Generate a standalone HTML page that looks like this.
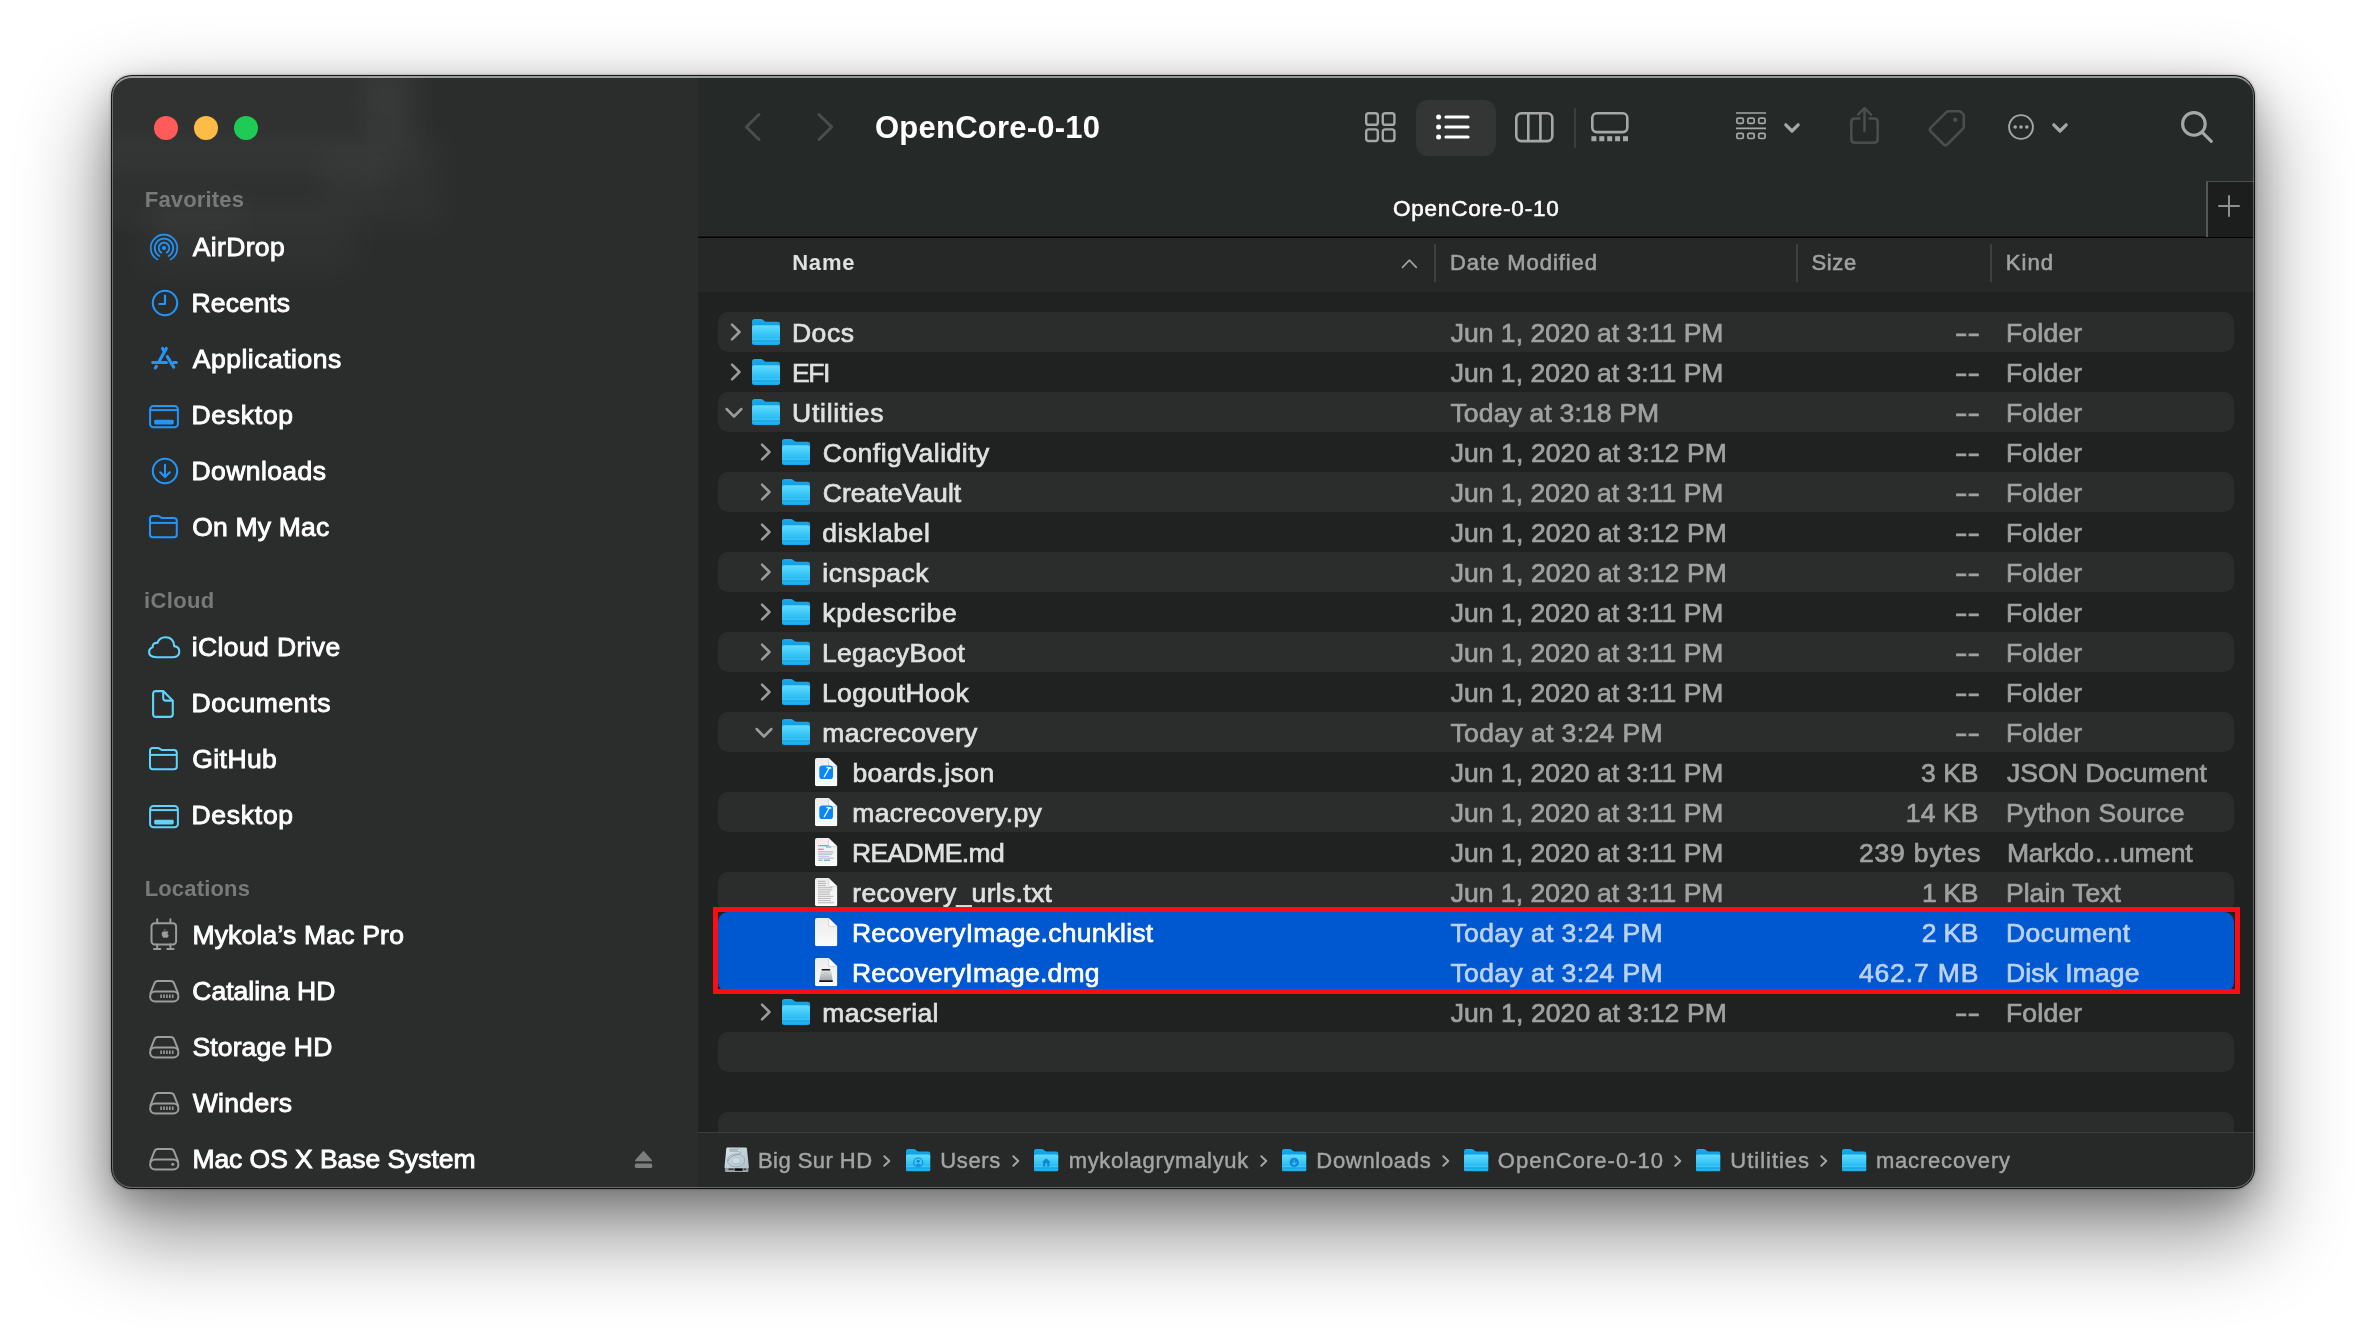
<!DOCTYPE html>
<html lang="en"><head><meta charset="utf-8"><title>OpenCore-0-10</title>
<style>
*{box-sizing:border-box;margin:0;padding:0}
html,body{width:2366px;height:1336px;overflow:hidden;background:#fff}
body{font-family:"Liberation Sans",sans-serif;position:relative;-webkit-font-smoothing:antialiased}
.win{position:absolute;left:112px;top:76px;width:2142px;height:1112px;border-radius:20px;background:#202221;
 box-shadow:0 0 0 1px rgba(0,0,0,.88),0 0 3px 1px rgba(0,0,0,.32),0 40px 84px 8px rgba(0,0,0,.44),0 12px 34px rgba(0,0,0,.24)}
.clip{position:absolute;inset:0;border-radius:20px;overflow:hidden;will-change:transform}
.rim{position:absolute;inset:0;border-radius:20px;border:1.5px solid rgba(255,255,255,.30);border-top:2px solid rgba(255,255,255,.52);pointer-events:none}
.sidebar{position:absolute;left:0;top:0;width:586px;height:1112px;background:#2b2d2c}
.sidebar .glow{position:absolute;left:0;top:0;width:586px;height:330px;overflow:hidden}
.glow i{position:absolute;display:block;background:#fff;filter:blur(16px)}
.tl{position:absolute;top:39.8px;width:24.400px;height:24.400px;border-radius:50%}
.toolbar{position:absolute;left:586px;top:0;width:1556px;height:161px;background:#252928}
.tabline{position:absolute;left:586px;top:160px;width:1556px;height:2px;background:linear-gradient(#151716 0,#151716 35%,#040404 35%)}
.colhdr{position:absolute;left:586px;top:162px;width:1556px;height:54px;background:#252827}
.colsep{position:absolute;top:168px;width:2px;height:38px;background:#3d403f}
.selbtn{position:absolute;left:1304px;top:24px;width:80px;height:56px;border-radius:12px;background:#333635}
.tbsep{position:absolute;left:1462.3px;top:32px;width:1.500px;height:40px;background:#3b3e3d}
.newtab{position:absolute;left:2094px;top:105px;width:48px;height:56px;background:#1c1e1d;border-left:2px solid #555857;border-top:1.500px solid #4c4f4e}
.list{position:absolute;left:586px;top:216px;width:1556px;height:840px;background:#202221}
.row{position:absolute;left:606px;width:1516px;height:40px;border-radius:10px}
.row.alt{background:#2b2d2c}
.row.sel{background:#0058d0}
.pathbar{position:absolute;left:586px;top:1056px;width:1556px;height:56px;background:#262928;border-top:1.500px solid #3b3e3d}
.redbox{position:absolute;left:601px;top:831px;width:1527px;height:87px;border:5px solid #fd0d12}
.t{position:absolute;white-space:pre;}
.i{position:absolute;overflow:visible}
</style></head>
<body>
<svg width="0" height="0" style="position:absolute"><defs>
<linearGradient id="fb" x1="0" y1="0" x2="0" y2="1"><stop offset="0" stop-color="#19abec"/><stop offset="1" stop-color="#0b93da"/></linearGradient>
<linearGradient id="ff" x1="0" y1="0" x2="0" y2="1"><stop offset="0" stop-color="#62dcfe"/><stop offset="0.45" stop-color="#3ac7f8"/><stop offset="1" stop-color="#15a9ea"/></linearGradient>
<linearGradient id="pp" x1="0" y1="0" x2="0" y2="1"><stop offset="0" stop-color="#ececec"/><stop offset="1" stop-color="#fbfbfb"/></linearGradient>
<linearGradient id="hd" x1="0" y1="0" x2="0" y2="1"><stop offset="0" stop-color="#e9ecee"/><stop offset="1" stop-color="#9aa1a6"/></linearGradient>
<symbol id="folder" viewBox="0 0 28 26"><path d="M0 2.600Q0 0 2.600 0H8.800Q10 0 10.900 .800L12.300 2.100Q13.100 2.800 14.300 2.800H25.600Q28 2.800 28 5.200V12H0Z" fill="url(#fb)"/>
<rect x="0" y="6.200" width="28" height="19.800" rx="2.200" fill="url(#ff)"/><path d="M0 20.300H28" stroke="#7fe0fb" stroke-opacity=".55" stroke-width=".8"/><path d="M0 23.800H28" stroke="#7fe0fb" stroke-opacity=".4" stroke-width=".7"/><rect x="0" y="20.700" width="28" height="2.700" fill="#0a9be0" fill-opacity=".35"/></symbol>
<symbol id="paper" viewBox="0 0 22.400 28.200"><path d="M0 2Q0 0 2 0H13.600L22.400 8.600V26.200Q22.400 28.200 20.400 28.200H2Q0 28.200 0 26.200Z" fill="url(#pp)"/><path d="M13.600 0L22.400 8.600H15.400Q13.600 8.600 13.600 6.800Z" fill="#fdfdfd"/><path d="M13.600 0V6.800Q13.600 8.600 15.400 8.600H22.400" fill="none" stroke="#c9c9c9" stroke-width=".7"/></symbol>
</defs></svg>
<div class="win">
 <div class="clip">
  <div class="sidebar"><div class="glow"><i style="left:-20px;top:-20px;width:325px;height:115px;opacity:.028"></i><i style="left:-20px;top:60px;width:350px;height:90px;opacity:.022"></i><i style="left:30px;top:135px;width:215px;height:60px;opacity:.024"></i><i style="left:250px;top:-10px;width:50px;height:70px;opacity:.03"></i><i style="left:210px;top:75px;width:60px;height:50px;opacity:.024"></i><i style="left:40px;top:120px;width:90px;height:40px;opacity:.02"></i></div>
   <div class="tl" style="left:41.80000000000001px;background:#fe5b5a"></div>
   <div class="tl" style="left:81.80000000000001px;background:#febb45"></div>
   <div class="tl" style="left:121.80000000000001px;background:#1fcb55"></div>
   <svg class="i" style="left:35.90px;top:155.50px" width="32" height="32" viewBox="0 0 32 32" ><g fill="none" stroke="#2196fc" stroke-width="1.7" stroke-linecap="round">
<path d="M9.55 27.63A13.3 13.3 0 1 1 22.45 27.63"/><path d="M11.49 24.13A9.3 9.3 0 1 1 20.51 24.13"/><path d="M13.43 20.64A5.3 5.3 0 1 1 18.57 20.64"/></g><circle cx="16" cy="16" r="2" fill="#2196fc"/></svg><svg class="i" style="left:36.90px;top:211.10px" width="32" height="32" viewBox="0 0 32 32" ><g fill="none" stroke="#2196fc" stroke-width="2.1" stroke-linecap="round" stroke-linejoin="round"><circle cx="16" cy="16" r="12.2"/><path d="M16 8.5V17H10.3"/></g></svg><svg class="i" style="left:38.00px;top:269.00px" width="30" height="26" viewBox="0 0 30 26" ><g fill="none" stroke="#2196fc" stroke-width="3.1" stroke-linecap="round">
<path d="M16.3 3.4L9.2 16.2"/><path d="M12.6 3.4L14.3 6.4"/><path d="M17.3 11.6L23.7 22.2"/><path d="M5.4 22.9L6.4 21.4"/><path d="M2.7 17.5H16.4M23.6 17.5H26.300"/></g></svg><svg class="i" style="left:37.00px;top:328.80px" width="30" height="24" viewBox="0 0 30 24" ><rect x="1.1" y="1" width="27.8" height="21.3" rx="3.4" fill="none" stroke="#2196fc" stroke-width="2"/>
<path d="M1.5 5.1H28.5" stroke="#2196fc" stroke-width="2"/><rect x="5.2" y="14.8" width="19.5" height="4.6" rx="1.4" fill="#2196fc"/></svg><svg class="i" style="left:36.90px;top:379.10px" width="32" height="32" viewBox="0 0 32 32" ><g fill="none" stroke="#2196fc" stroke-width="2.1" stroke-linecap="round" stroke-linejoin="round"><circle cx="16" cy="16" r="12.2"/><path d="M16 9.8V21.8M11.2 17.3L16 22.1L20.8 17.3"/></g></svg><svg class="i" style="left:37.10px;top:439.00px" width="30" height="24" viewBox="0 0 30 24" ><g fill="none" stroke="#2196fc" stroke-width="2" stroke-linejoin="round">
<path d="M1 19.400V3.800Q1 1 3.800 1H8.600Q10 1 11 1.900L11.800 2.400Q12.800 3.100 14.200 3.100H25Q27.800 3.100 27.800 5.900V19.400Q27.800 22.200 25 22.200H3.800Q1 22.200 1 19.400Z"/>
<path d="M1.300 7.900H27.600"/></g></svg><svg class="i" style="left:35.50px;top:559.60px" width="33" height="23" viewBox="0 0 33 23" ><path d="M8.2 21.2H25.1Q31.3 21.2 31.3 15.6Q31.3 10.6 26.2 10.1Q25.6 1.2 17.4 1.2Q11.6 1.2 9.4 6.9Q4.4 6.4 4.6 11.2Q1.1 12.4 1.1 16.1Q1.1 21.2 8.2 21.2Z" fill="none" stroke="#60d4fc" stroke-width="2.1" stroke-linejoin="round"/></svg><svg class="i" style="left:40.40px;top:614.00px" width="23" height="29" viewBox="0 0 23 29" ><g fill="none" stroke="#60d4fc" stroke-width="2.1" stroke-linejoin="round">
<path d="M1.1 24V4Q1.1 1.1 4 1.1H11.2L20.8 10.8V24Q20.8 26.9 17.9 26.9H4Q1.1 26.9 1.1 24Z"/><path d="M11.2 1.4V8Q11.2 10.6 13.8 10.6H20.5"/></g></svg><svg class="i" style="left:37.10px;top:671.00px" width="30" height="24" viewBox="0 0 30 24" ><g fill="none" stroke="#60d4fc" stroke-width="2" stroke-linejoin="round">
<path d="M1 19.400V3.800Q1 1 3.800 1H8.600Q10 1 11 1.900L11.800 2.400Q12.800 3.100 14.200 3.100H25Q27.800 3.100 27.800 5.900V19.400Q27.800 22.200 25 22.200H3.800Q1 22.200 1 19.400Z"/>
<path d="M1.300 7.900H27.600"/></g></svg><svg class="i" style="left:37.00px;top:728.50px" width="30" height="24" viewBox="0 0 30 24" ><rect x="1.1" y="1" width="27.8" height="21.3" rx="3.4" fill="none" stroke="#60d4fc" stroke-width="2"/>
<path d="M1.5 5.1H28.5" stroke="#60d4fc" stroke-width="2"/><rect x="5.2" y="14.8" width="19.5" height="4.6" rx="1.4" fill="#60d4fc"/></svg><svg class="i" style="left:38.40px;top:841.60px" width="28" height="33" viewBox="0 0 28 33" ><g fill="none" stroke="#9b9d9c" stroke-width="2" stroke-linecap="round" stroke-linejoin="round">
<rect x="1.5" y="5.2" width="24.6" height="21.2" rx="3.2"/>
<path d="M7.2 5V1.2M20.4 5V1.2M7.2 26.6V30.6M20.4 26.6V30.6M4 31H10.4M17.2 31H23.6"/></g>
<path d="M15.6 11.1c-.1.9-.8 1.6-1.6 1.6 0-.9.8-1.7 1.600-1.6zM13.800 13.200c.5 0 .9.300 1.400.300s1-.4 1.700-.3c.7 0 1.300.4 1.600.9-1.400.9-1.200 2.900.3 3.500-.3.900-1.200 2.300-2 2.300-.5 0-.8-.3-1.400-.3s-.9.300-1.400.3c-.9 0-2.300-2.100-2.300-3.900 0-1.700 1.100-2.800 2.100-2.800z" fill="#9b9d9c"/></svg><svg class="i" style="left:36.70px;top:904.20px" width="31" height="23" viewBox="0 0 31 23" ><g fill="none" stroke="#9b9d9c" stroke-width="2" stroke-linejoin="round">
<path d="M1.2 14.2L5.3 3.6Q6.3 1.1 9 1.100H21.500Q24.2 1.100 25.2 3.600L29.300 14.2"/>
<rect x="1.1" y="11.4" width="28.3" height="10" rx="5"/></g><path d="M12.1 14.5V17.9" stroke="#9b9d9c" stroke-width="1.600"/><path d="M15.0 14.5V17.9" stroke="#9b9d9c" stroke-width="1.600"/><path d="M17.9 14.5V17.9" stroke="#9b9d9c" stroke-width="1.600"/><path d="M20.799999999999997 14.5V17.9" stroke="#9b9d9c" stroke-width="1.600"/><path d="M23.7 14.5V17.9" stroke="#9b9d9c" stroke-width="1.600"/></svg><svg class="i" style="left:36.70px;top:960.20px" width="31" height="23" viewBox="0 0 31 23" ><g fill="none" stroke="#9b9d9c" stroke-width="2" stroke-linejoin="round">
<path d="M1.2 14.2L5.3 3.6Q6.3 1.1 9 1.100H21.500Q24.2 1.100 25.2 3.600L29.300 14.2"/>
<rect x="1.1" y="11.4" width="28.3" height="10" rx="5"/></g><path d="M12.1 14.5V17.9" stroke="#9b9d9c" stroke-width="1.600"/><path d="M15.0 14.5V17.9" stroke="#9b9d9c" stroke-width="1.600"/><path d="M17.9 14.5V17.9" stroke="#9b9d9c" stroke-width="1.600"/><path d="M20.799999999999997 14.5V17.9" stroke="#9b9d9c" stroke-width="1.600"/><path d="M23.7 14.5V17.9" stroke="#9b9d9c" stroke-width="1.600"/></svg><svg class="i" style="left:36.70px;top:1016.20px" width="31" height="23" viewBox="0 0 31 23" ><g fill="none" stroke="#9b9d9c" stroke-width="2" stroke-linejoin="round">
<path d="M1.2 14.2L5.3 3.6Q6.3 1.1 9 1.100H21.500Q24.2 1.100 25.2 3.600L29.300 14.2"/>
<rect x="1.1" y="11.4" width="28.3" height="10" rx="5"/></g><path d="M12.1 14.5V17.9" stroke="#9b9d9c" stroke-width="1.600"/><path d="M15.0 14.5V17.9" stroke="#9b9d9c" stroke-width="1.600"/><path d="M17.9 14.5V17.9" stroke="#9b9d9c" stroke-width="1.600"/><path d="M20.799999999999997 14.5V17.9" stroke="#9b9d9c" stroke-width="1.600"/><path d="M23.7 14.5V17.9" stroke="#9b9d9c" stroke-width="1.600"/></svg><svg class="i" style="left:36.70px;top:1072.20px" width="31" height="23" viewBox="0 0 31 23" ><g fill="none" stroke="#9b9d9c" stroke-width="2" stroke-linejoin="round">
<path d="M1.2 14.2L5.3 3.6Q6.3 1.1 9 1.100H21.500Q24.2 1.100 25.2 3.600L29.300 14.2"/>
<rect x="1.1" y="11.4" width="28.3" height="10" rx="5"/></g><circle cx="23.8" cy="16.2" r="1.5" fill="#9b9d9c"/></svg><svg class="i" style="left:522.00px;top:1073.60px" width="19" height="19" viewBox="0 0 19 19" ><path d="M9.500 0.800L18 10.200Q18.400 11.200 17.200 11.200H1.800Q0.600 11.200 1 10.200Z" fill="#7c7e7d"/><rect x="0.800" y="13.400" width="17.400" height="4.600" rx="1.600" fill="#7c7e7d"/></svg>
   <span class="t" style="left:32.83px;top:111.00px;font-size:22px;line-height:26px;letter-spacing:0.157px;color:#787a79;font-weight:bold;">Favorites</span>
<span class="t" style="left:32.06px;top:511.50px;font-size:22px;line-height:26px;letter-spacing:0.342px;color:#787a79;font-weight:bold;">iCloud</span>
<span class="t" style="left:32.63px;top:799.75px;font-size:22px;line-height:26px;letter-spacing:0.172px;color:#787a79;font-weight:bold;">Locations</span>
<span class="t" style="left:80.75px;top:154.75px;font-size:26.5px;line-height:32px;letter-spacing:0.340px;color:#ffffff;-webkit-text-stroke:0.9px #ffffff;">AirDrop</span>
<span class="t" style="left:79.43px;top:210.75px;font-size:26.5px;line-height:32px;letter-spacing:0.220px;color:#ffffff;-webkit-text-stroke:0.9px #ffffff;">Recents</span>
<span class="t" style="left:80.75px;top:266.75px;font-size:26.5px;line-height:32px;letter-spacing:0.511px;color:#ffffff;-webkit-text-stroke:0.9px #ffffff;">Applications</span>
<span class="t" style="left:79.43px;top:322.75px;font-size:26.5px;line-height:32px;letter-spacing:0.745px;color:#ffffff;-webkit-text-stroke:0.9px #ffffff;">Desktop</span>
<span class="t" style="left:79.43px;top:378.75px;font-size:26.5px;line-height:32px;letter-spacing:0.429px;color:#ffffff;-webkit-text-stroke:0.9px #ffffff;">Downloads</span>
<span class="t" style="left:80.34px;top:434.75px;font-size:26.5px;line-height:32px;letter-spacing:0.174px;color:#ffffff;-webkit-text-stroke:0.9px #ffffff;">On My Mac</span>
<span class="t" style="left:79.83px;top:554.75px;font-size:26.5px;line-height:32px;letter-spacing:0.366px;color:#ffffff;-webkit-text-stroke:0.9px #ffffff;">iCloud Drive</span>
<span class="t" style="left:79.43px;top:610.75px;font-size:26.5px;line-height:32px;letter-spacing:0.626px;color:#ffffff;-webkit-text-stroke:0.9px #ffffff;">Documents</span>
<span class="t" style="left:80.27px;top:666.75px;font-size:26.5px;line-height:32px;letter-spacing:0.424px;color:#ffffff;-webkit-text-stroke:0.9px #ffffff;">GitHub</span>
<span class="t" style="left:79.43px;top:722.75px;font-size:26.5px;line-height:32px;letter-spacing:0.745px;color:#ffffff;-webkit-text-stroke:0.9px #ffffff;">Desktop</span>
<span class="t" style="left:80.43px;top:842.75px;font-size:26.5px;line-height:32px;letter-spacing:0.188px;color:#ffffff;-webkit-text-stroke:0.9px #ffffff;">Mykola’s Mac Pro</span>
<span class="t" style="left:80.25px;top:898.75px;font-size:26.5px;line-height:32px;letter-spacing:0.015px;color:#ffffff;-webkit-text-stroke:0.9px #ffffff;">Catalina HD</span>
<span class="t" style="left:80.40px;top:954.75px;font-size:26.5px;line-height:32px;letter-spacing:0.158px;color:#ffffff;-webkit-text-stroke:0.9px #ffffff;">Storage HD</span>
<span class="t" style="left:80.68px;top:1010.75px;font-size:26.5px;line-height:32px;letter-spacing:0.348px;color:#ffffff;-webkit-text-stroke:0.9px #ffffff;">Winders</span>
<span class="t" style="left:80.43px;top:1066.75px;font-size:26.5px;line-height:32px;letter-spacing:-0.061px;color:#ffffff;-webkit-text-stroke:0.9px #ffffff;">Mac OS X Base System</span>
  </div>
  <div class="toolbar"></div>
  <div class="tabline"></div>
  <div class="colhdr"></div>
  <div class="list"></div>
  <div class="selbtn"></div><div class="tbsep"></div><div class="newtab"></div>
  <div class="colsep" style="left:1322px"></div><div class="colsep" style="left:1684px"></div><div class="colsep" style="left:1878px"></div>
  <svg class="i" style="left:632.00px;top:37.00px" width="17" height="28" viewBox="0 0 17 28" ><path d="M15 1.500L2.300 14L15 26.500" fill="none" stroke="#4b4e4d" stroke-width="3" stroke-linecap="round" stroke-linejoin="round"/></svg><svg class="i" style="left:704.50px;top:37.00px" width="17" height="28" viewBox="0 0 17 28" ><path d="M2 1.500L14.700 14L2 26.500" fill="none" stroke="#4b4e4d" stroke-width="3" stroke-linecap="round" stroke-linejoin="round"/></svg><svg class="i" style="left:1252.70px;top:35.80px" width="31" height="31" viewBox="0 0 31 31" ><g fill="none" stroke="#a6a8a7" stroke-width="2.4"><rect x="1.2" y="1.2" width="11.600" height="11.600" rx="2.400"/><rect x="1.2" y="17.4" width="11.600" height="11.600" rx="2.400"/><rect x="17.8" y="1.2" width="11.600" height="11.600" rx="2.400"/><rect x="17.8" y="17.4" width="11.600" height="11.600" rx="2.400"/></g></svg><svg class="i" style="left:1324.40px;top:37.90px" width="34" height="26" viewBox="0 0 34 26" ><circle cx="2.600" cy="3" r="2.500" fill="#fff"/><rect x="8.400" y="1.4" width="25.200" height="3.200" rx="1.600" fill="#fff"/><circle cx="2.600" cy="13" r="2.500" fill="#fff"/><rect x="8.400" y="11.4" width="25.200" height="3.200" rx="1.600" fill="#fff"/><circle cx="2.600" cy="23" r="2.500" fill="#fff"/><rect x="8.400" y="21.4" width="25.200" height="3.200" rx="1.600" fill="#fff"/></svg><svg class="i" style="left:1403.00px;top:35.80px" width="39" height="31" viewBox="0 0 39 31" ><g fill="none" stroke="#a6a8a7" stroke-width="2.600"><rect x="1.300" y="1.300" width="36" height="27.800" rx="5"/><path d="M13.300 1.200V29.200M25.400 1.200V29.200"/></g></svg><svg class="i" style="left:1479.00px;top:35.90px" width="38" height="30" viewBox="0 0 38 30" ><rect x="1.300" y="1.300" width="35" height="18.800" rx="4.500" fill="none" stroke="#a6a8a7" stroke-width="2.600"/><rect x="0.4" y="24.200" width="5" height="5" fill="#a6a8a7"/><rect x="8.3" y="24.200" width="5" height="5" fill="#a6a8a7"/><rect x="16.2" y="24.200" width="5" height="5" fill="#a6a8a7"/><rect x="24.1" y="24.200" width="5" height="5" fill="#a6a8a7"/><rect x="32.0" y="24.200" width="5" height="5" fill="#a6a8a7"/></svg><svg class="i" style="left:1624.00px;top:36.00px" width="31" height="29" viewBox="0 0 31 29" ><g fill="none" stroke="#a6a8a7" stroke-width="1.700"><path d="M0 1H30M0 16.300H30"/><rect x="0.9" y="6.2" width="6.400" height="5.200" rx="1.500"/><rect x="0.9" y="21.3" width="6.400" height="5.200" rx="1.500"/><rect x="11.8" y="6.2" width="6.400" height="5.200" rx="1.500"/><rect x="11.8" y="21.3" width="6.400" height="5.200" rx="1.500"/><rect x="22.7" y="6.2" width="6.400" height="5.200" rx="1.500"/><rect x="22.7" y="21.3" width="6.400" height="5.200" rx="1.500"/></g></svg><svg class="i" style="left:1672.00px;top:47.20px" width="16" height="10" viewBox="0 0 16 10" ><path d="M1.800 1.800L8 8L14.200 1.800" fill="none" stroke="#a6a8a7" stroke-width="3.200" stroke-linecap="round" stroke-linejoin="round"/></svg><svg class="i" style="left:1737.00px;top:30.00px" width="32" height="40" viewBox="0 0 32 40" ><g fill="none" stroke="#4b4e4d" stroke-width="2.500" stroke-linecap="round" stroke-linejoin="round"><path d="M10.500 12.500H6Q2.300 12.500 2.300 16.200V33Q2.300 36.700 6 36.700H25Q28.700 36.700 28.700 33V16.200Q28.700 12.500 25 12.500H20.500"/><path d="M15.500 25V2.400M9 8.600L15.500 2.200L22 8.600"/></g></svg><svg class="i" style="left:1815.00px;top:32.00px" width="40" height="40" viewBox="0 0 40 40" ><g fill="none" stroke="#4b4e4d" stroke-width="2.600" stroke-linejoin="round"><path d="M21.400 3.300H32.200Q33.400 3.300 34.200 4.100L36 5.900Q36.800 6.700 36.800 7.900V18.700Q36.800 19.900 36 20.700L20.200 36.500Q18.500 38.200 16.800 36.500L3.600 23.300Q1.900 21.600 3.600 19.900L19.400 4.100Q20.200 3.300 21.400 3.300Z"/></g><circle cx="28.300" cy="11.800" r="2.300" fill="#4b4e4d"/></svg><svg class="i" style="left:1894.60px;top:37.30px" width="28" height="28" viewBox="0 0 28 28" ><circle cx="14" cy="14" r="11.900" fill="none" stroke="#a6a8a7" stroke-width="1.900"/><circle cx="8.200" cy="14" r="1.800" fill="#a6a8a7"/><circle cx="14" cy="14" r="1.800" fill="#a6a8a7"/><circle cx="19.800" cy="14" r="1.800" fill="#a6a8a7"/></svg><svg class="i" style="left:1940.00px;top:47.20px" width="16" height="10" viewBox="0 0 16 10" ><path d="M1.800 1.800L8 8L14.200 1.800" fill="none" stroke="#a6a8a7" stroke-width="3.200" stroke-linecap="round" stroke-linejoin="round"/></svg><svg class="i" style="left:2068.00px;top:33.50px" width="34" height="34" viewBox="0 0 34 34" ><g fill="none" stroke="#a6a8a7" stroke-width="3.100" stroke-linecap="round"><circle cx="13.900" cy="13.900" r="11.300"/><path d="M22.300 22.300L31.300 31.300"/></g></svg><svg class="i" style="left:2106.00px;top:118.50px" width="22" height="22" viewBox="0 0 22 22" ><path d="M11 1V21M1 11H21" stroke="#8e908f" stroke-width="2" stroke-linecap="round"/></svg><svg class="i" style="left:1289.00px;top:181.50px" width="17" height="11" viewBox="0 0 17 11" ><path d="M1.500 9.300L8.400 2.200L15.300 9.300" fill="none" stroke="#a0a2a1" stroke-width="1.700" stroke-linecap="round" stroke-linejoin="round"/></svg>
  <span class="t" style="left:763.03px;top:32.80px;font-size:31px;line-height:37px;letter-spacing:0.227px;color:#ffffff;font-weight:bold;">OpenCore-0-10</span>
  <span class="t" style="left:1280.93px;top:119.20px;font-size:22.5px;line-height:27px;letter-spacing:0.792px;color:#ffffff;-webkit-text-stroke:0.55px #ffffff;">OpenCore-0-10</span>
  <span class="t" style="left:680.13px;top:173.50px;font-size:22px;line-height:26px;letter-spacing:0.818px;color:#dfe1e0;font-weight:bold;">Name</span>
<span class="t" style="left:1338.00px;top:173.50px;font-size:22px;line-height:26px;letter-spacing:0.940px;color:#a0a2a1;-webkit-text-stroke:0.6px #a0a2a1;">Date Modified</span>
<span class="t" style="left:1699.50px;top:173.50px;font-size:22px;line-height:26px;letter-spacing:0.627px;color:#a0a2a1;-webkit-text-stroke:0.6px #a0a2a1;">Size</span>
<span class="t" style="left:1893.80px;top:173.50px;font-size:22px;line-height:26px;letter-spacing:1.030px;color:#a0a2a1;-webkit-text-stroke:0.6px #a0a2a1;">Kind</span>
  <div class="row sel" style="top:836px;height:80px"></div>
  <div class="row alt" style="top:236px"></div>
<svg class="i" style="left:618.00px;top:246.70px" width="12" height="18" viewBox="0 0 12 18" ><path d="M2 1.600L9.500 9L2 16.400" fill="none" stroke="#9b9d9c" stroke-width="2.500" stroke-linecap="round" stroke-linejoin="round"/></svg>
<svg class="i" style="left:640.00px;top:242.90px" width="28" height="26"><use href="#folder"/></svg>
<span class="t" style="left:679.93px;top:241.20px;font-size:26.5px;line-height:32px;letter-spacing:0.552px;color:#dfe1e0;-webkit-text-stroke:0.7px #dfe1e0;">Docs</span>
<span class="t" style="left:1338.64px;top:241.20px;font-size:26.5px;line-height:32px;letter-spacing:0.035px;color:#9fa1a0;-webkit-text-stroke:0.7px #9fa1a0;">Jun 1, 2020 at 3:11 PM</span>
<span class="t" style="left:1843.09px;top:241.20px;font-size:26.5px;line-height:32px;letter-spacing:0.000px;color:#9fa1a0;transform:scaleX(1.406);transform-origin:0 0;-webkit-text-stroke:0.7px #9fa1a0;">--</span>
<span class="t" style="left:1893.93px;top:241.20px;font-size:26.5px;line-height:32px;letter-spacing:0.230px;color:#9fa1a0;-webkit-text-stroke:0.7px #9fa1a0;">Folder</span><div class="row" style="top:276px"></div>
<svg class="i" style="left:618.00px;top:286.70px" width="12" height="18" viewBox="0 0 12 18" ><path d="M2 1.600L9.500 9L2 16.400" fill="none" stroke="#9b9d9c" stroke-width="2.500" stroke-linecap="round" stroke-linejoin="round"/></svg>
<svg class="i" style="left:640.00px;top:282.90px" width="28" height="26"><use href="#folder"/></svg>
<span class="t" style="left:679.93px;top:281.20px;font-size:26.5px;line-height:32px;letter-spacing:-1.353px;color:#dfe1e0;-webkit-text-stroke:0.7px #dfe1e0;">EFI</span>
<span class="t" style="left:1338.64px;top:281.20px;font-size:26.5px;line-height:32px;letter-spacing:0.035px;color:#9fa1a0;-webkit-text-stroke:0.7px #9fa1a0;">Jun 1, 2020 at 3:11 PM</span>
<span class="t" style="left:1843.09px;top:281.20px;font-size:26.5px;line-height:32px;letter-spacing:0.000px;color:#9fa1a0;transform:scaleX(1.406);transform-origin:0 0;-webkit-text-stroke:0.7px #9fa1a0;">--</span>
<span class="t" style="left:1893.93px;top:281.20px;font-size:26.5px;line-height:32px;letter-spacing:0.230px;color:#9fa1a0;-webkit-text-stroke:0.7px #9fa1a0;">Folder</span><div class="row alt" style="top:316px"></div>
<svg class="i" style="left:613.20px;top:330.80px" width="18" height="12" viewBox="0 0 18 12" ><path d="M1.600 2L9 9.500L16.400 2" fill="none" stroke="#9b9d9c" stroke-width="2.500" stroke-linecap="round" stroke-linejoin="round"/></svg>
<svg class="i" style="left:640.00px;top:322.90px" width="28" height="26"><use href="#folder"/></svg>
<span class="t" style="left:680.06px;top:321.20px;font-size:26.5px;line-height:32px;letter-spacing:0.750px;color:#dfe1e0;-webkit-text-stroke:0.7px #dfe1e0;">Utilities</span>
<span class="t" style="left:1338.45px;top:321.20px;font-size:26.5px;line-height:32px;letter-spacing:0.166px;color:#9fa1a0;-webkit-text-stroke:0.7px #9fa1a0;">Today at 3:18 PM</span>
<span class="t" style="left:1843.09px;top:321.20px;font-size:26.5px;line-height:32px;letter-spacing:0.000px;color:#9fa1a0;transform:scaleX(1.406);transform-origin:0 0;-webkit-text-stroke:0.7px #9fa1a0;">--</span>
<span class="t" style="left:1893.93px;top:321.20px;font-size:26.5px;line-height:32px;letter-spacing:0.230px;color:#9fa1a0;-webkit-text-stroke:0.7px #9fa1a0;">Folder</span><div class="row" style="top:356px"></div>
<svg class="i" style="left:648.00px;top:366.70px" width="12" height="18" viewBox="0 0 12 18" ><path d="M2 1.600L9.500 9L2 16.400" fill="none" stroke="#9b9d9c" stroke-width="2.500" stroke-linecap="round" stroke-linejoin="round"/></svg>
<svg class="i" style="left:670.00px;top:362.90px" width="28" height="26"><use href="#folder"/></svg>
<span class="t" style="left:710.75px;top:361.20px;font-size:26.5px;line-height:32px;letter-spacing:0.499px;color:#dfe1e0;-webkit-text-stroke:0.7px #dfe1e0;">ConfigValidity</span>
<span class="t" style="left:1338.64px;top:361.20px;font-size:26.5px;line-height:32px;letter-spacing:0.101px;color:#9fa1a0;-webkit-text-stroke:0.7px #9fa1a0;">Jun 1, 2020 at 3:12 PM</span>
<span class="t" style="left:1843.09px;top:361.20px;font-size:26.5px;line-height:32px;letter-spacing:0.000px;color:#9fa1a0;transform:scaleX(1.406);transform-origin:0 0;-webkit-text-stroke:0.7px #9fa1a0;">--</span>
<span class="t" style="left:1893.93px;top:361.20px;font-size:26.5px;line-height:32px;letter-spacing:0.230px;color:#9fa1a0;-webkit-text-stroke:0.7px #9fa1a0;">Folder</span><div class="row alt" style="top:396px"></div>
<svg class="i" style="left:648.00px;top:406.70px" width="12" height="18" viewBox="0 0 12 18" ><path d="M2 1.600L9.500 9L2 16.400" fill="none" stroke="#9b9d9c" stroke-width="2.500" stroke-linecap="round" stroke-linejoin="round"/></svg>
<svg class="i" style="left:670.00px;top:402.90px" width="28" height="26"><use href="#folder"/></svg>
<span class="t" style="left:710.75px;top:401.20px;font-size:26.5px;line-height:32px;letter-spacing:0.047px;color:#dfe1e0;-webkit-text-stroke:0.7px #dfe1e0;">CreateVault</span>
<span class="t" style="left:1338.64px;top:401.20px;font-size:26.5px;line-height:32px;letter-spacing:0.035px;color:#9fa1a0;-webkit-text-stroke:0.7px #9fa1a0;">Jun 1, 2020 at 3:11 PM</span>
<span class="t" style="left:1843.09px;top:401.20px;font-size:26.5px;line-height:32px;letter-spacing:0.000px;color:#9fa1a0;transform:scaleX(1.406);transform-origin:0 0;-webkit-text-stroke:0.7px #9fa1a0;">--</span>
<span class="t" style="left:1893.93px;top:401.20px;font-size:26.5px;line-height:32px;letter-spacing:0.230px;color:#9fa1a0;-webkit-text-stroke:0.7px #9fa1a0;">Folder</span><div class="row" style="top:436px"></div>
<svg class="i" style="left:648.00px;top:446.70px" width="12" height="18" viewBox="0 0 12 18" ><path d="M2 1.600L9.500 9L2 16.400" fill="none" stroke="#9b9d9c" stroke-width="2.500" stroke-linecap="round" stroke-linejoin="round"/></svg>
<svg class="i" style="left:670.00px;top:442.90px" width="28" height="26"><use href="#folder"/></svg>
<span class="t" style="left:710.19px;top:441.20px;font-size:26.5px;line-height:32px;letter-spacing:0.559px;color:#dfe1e0;-webkit-text-stroke:0.7px #dfe1e0;">disklabel</span>
<span class="t" style="left:1338.64px;top:441.20px;font-size:26.5px;line-height:32px;letter-spacing:0.101px;color:#9fa1a0;-webkit-text-stroke:0.7px #9fa1a0;">Jun 1, 2020 at 3:12 PM</span>
<span class="t" style="left:1843.09px;top:441.20px;font-size:26.5px;line-height:32px;letter-spacing:0.000px;color:#9fa1a0;transform:scaleX(1.406);transform-origin:0 0;-webkit-text-stroke:0.7px #9fa1a0;">--</span>
<span class="t" style="left:1893.93px;top:441.20px;font-size:26.5px;line-height:32px;letter-spacing:0.230px;color:#9fa1a0;-webkit-text-stroke:0.7px #9fa1a0;">Folder</span><div class="row alt" style="top:476px"></div>
<svg class="i" style="left:648.00px;top:486.70px" width="12" height="18" viewBox="0 0 12 18" ><path d="M2 1.600L9.500 9L2 16.400" fill="none" stroke="#9b9d9c" stroke-width="2.500" stroke-linecap="round" stroke-linejoin="round"/></svg>
<svg class="i" style="left:670.00px;top:482.90px" width="28" height="26"><use href="#folder"/></svg>
<span class="t" style="left:710.33px;top:481.20px;font-size:26.5px;line-height:32px;letter-spacing:0.433px;color:#dfe1e0;-webkit-text-stroke:0.7px #dfe1e0;">icnspack</span>
<span class="t" style="left:1338.64px;top:481.20px;font-size:26.5px;line-height:32px;letter-spacing:0.101px;color:#9fa1a0;-webkit-text-stroke:0.7px #9fa1a0;">Jun 1, 2020 at 3:12 PM</span>
<span class="t" style="left:1843.09px;top:481.20px;font-size:26.5px;line-height:32px;letter-spacing:0.000px;color:#9fa1a0;transform:scaleX(1.406);transform-origin:0 0;-webkit-text-stroke:0.7px #9fa1a0;">--</span>
<span class="t" style="left:1893.93px;top:481.20px;font-size:26.5px;line-height:32px;letter-spacing:0.230px;color:#9fa1a0;-webkit-text-stroke:0.7px #9fa1a0;">Folder</span><div class="row" style="top:516px"></div>
<svg class="i" style="left:648.00px;top:526.70px" width="12" height="18" viewBox="0 0 12 18" ><path d="M2 1.600L9.500 9L2 16.400" fill="none" stroke="#9b9d9c" stroke-width="2.500" stroke-linecap="round" stroke-linejoin="round"/></svg>
<svg class="i" style="left:670.00px;top:522.90px" width="28" height="26"><use href="#folder"/></svg>
<span class="t" style="left:710.31px;top:521.20px;font-size:26.5px;line-height:32px;letter-spacing:0.690px;color:#dfe1e0;-webkit-text-stroke:0.7px #dfe1e0;">kpdescribe</span>
<span class="t" style="left:1338.64px;top:521.20px;font-size:26.5px;line-height:32px;letter-spacing:0.035px;color:#9fa1a0;-webkit-text-stroke:0.7px #9fa1a0;">Jun 1, 2020 at 3:11 PM</span>
<span class="t" style="left:1843.09px;top:521.20px;font-size:26.5px;line-height:32px;letter-spacing:0.000px;color:#9fa1a0;transform:scaleX(1.406);transform-origin:0 0;-webkit-text-stroke:0.7px #9fa1a0;">--</span>
<span class="t" style="left:1893.93px;top:521.20px;font-size:26.5px;line-height:32px;letter-spacing:0.230px;color:#9fa1a0;-webkit-text-stroke:0.7px #9fa1a0;">Folder</span><div class="row alt" style="top:556px"></div>
<svg class="i" style="left:648.00px;top:566.70px" width="12" height="18" viewBox="0 0 12 18" ><path d="M2 1.600L9.500 9L2 16.400" fill="none" stroke="#9b9d9c" stroke-width="2.500" stroke-linecap="round" stroke-linejoin="round"/></svg>
<svg class="i" style="left:670.00px;top:562.90px" width="28" height="26"><use href="#folder"/></svg>
<span class="t" style="left:709.93px;top:561.20px;font-size:26.5px;line-height:32px;letter-spacing:0.339px;color:#dfe1e0;-webkit-text-stroke:0.7px #dfe1e0;">LegacyBoot</span>
<span class="t" style="left:1338.64px;top:561.20px;font-size:26.5px;line-height:32px;letter-spacing:0.035px;color:#9fa1a0;-webkit-text-stroke:0.7px #9fa1a0;">Jun 1, 2020 at 3:11 PM</span>
<span class="t" style="left:1843.09px;top:561.20px;font-size:26.5px;line-height:32px;letter-spacing:0.000px;color:#9fa1a0;transform:scaleX(1.406);transform-origin:0 0;-webkit-text-stroke:0.7px #9fa1a0;">--</span>
<span class="t" style="left:1893.93px;top:561.20px;font-size:26.5px;line-height:32px;letter-spacing:0.230px;color:#9fa1a0;-webkit-text-stroke:0.7px #9fa1a0;">Folder</span><div class="row" style="top:596px"></div>
<svg class="i" style="left:648.00px;top:606.70px" width="12" height="18" viewBox="0 0 12 18" ><path d="M2 1.600L9.500 9L2 16.400" fill="none" stroke="#9b9d9c" stroke-width="2.500" stroke-linecap="round" stroke-linejoin="round"/></svg>
<svg class="i" style="left:670.00px;top:602.90px" width="28" height="26"><use href="#folder"/></svg>
<span class="t" style="left:709.93px;top:601.20px;font-size:26.5px;line-height:32px;letter-spacing:0.430px;color:#dfe1e0;-webkit-text-stroke:0.7px #dfe1e0;">LogoutHook</span>
<span class="t" style="left:1338.64px;top:601.20px;font-size:26.5px;line-height:32px;letter-spacing:0.035px;color:#9fa1a0;-webkit-text-stroke:0.7px #9fa1a0;">Jun 1, 2020 at 3:11 PM</span>
<span class="t" style="left:1843.09px;top:601.20px;font-size:26.5px;line-height:32px;letter-spacing:0.000px;color:#9fa1a0;transform:scaleX(1.406);transform-origin:0 0;-webkit-text-stroke:0.7px #9fa1a0;">--</span>
<span class="t" style="left:1893.93px;top:601.20px;font-size:26.5px;line-height:32px;letter-spacing:0.230px;color:#9fa1a0;-webkit-text-stroke:0.7px #9fa1a0;">Folder</span><div class="row alt" style="top:636px"></div>
<svg class="i" style="left:643.20px;top:650.80px" width="18" height="12" viewBox="0 0 18 12" ><path d="M1.600 2L9 9.500L16.400 2" fill="none" stroke="#9b9d9c" stroke-width="2.500" stroke-linecap="round" stroke-linejoin="round"/></svg>
<svg class="i" style="left:670.00px;top:642.90px" width="28" height="26"><use href="#folder"/></svg>
<span class="t" style="left:710.34px;top:641.20px;font-size:26.5px;line-height:32px;letter-spacing:0.329px;color:#dfe1e0;-webkit-text-stroke:0.7px #dfe1e0;">macrecovery</span>
<span class="t" style="left:1338.45px;top:641.20px;font-size:26.5px;line-height:32px;letter-spacing:0.399px;color:#9fa1a0;-webkit-text-stroke:0.7px #9fa1a0;">Today at 3:24 PM</span>
<span class="t" style="left:1843.09px;top:641.20px;font-size:26.5px;line-height:32px;letter-spacing:0.000px;color:#9fa1a0;transform:scaleX(1.406);transform-origin:0 0;-webkit-text-stroke:0.7px #9fa1a0;">--</span>
<span class="t" style="left:1893.93px;top:641.20px;font-size:26.5px;line-height:32px;letter-spacing:0.230px;color:#9fa1a0;-webkit-text-stroke:0.7px #9fa1a0;">Folder</span><div class="row" style="top:676px"></div>
<svg class="i" style="left:702.80px;top:681.90px" width="22.400" height="28.200" viewBox="0 0 22.400 28.200"><use href="#paper"/><rect x="4.300" y="7.400" width="13.700" height="13.700" rx="3.200" fill="#0b86f6"/><path d="M14.300 9.800L9.300 18.800" stroke="#fff" stroke-width="1.300" stroke-linecap="round"/><path d="M12 9.600L15.600 10.100" stroke="#fff" stroke-width="1.500" stroke-linecap="round"/></svg>
<span class="t" style="left:740.39px;top:681.20px;font-size:26.5px;line-height:32px;letter-spacing:0.483px;color:#dfe1e0;-webkit-text-stroke:0.7px #dfe1e0;">boards.json</span>
<span class="t" style="left:1338.64px;top:681.20px;font-size:26.5px;line-height:32px;letter-spacing:0.035px;color:#9fa1a0;-webkit-text-stroke:0.7px #9fa1a0;">Jun 1, 2020 at 3:11 PM</span>
<span class="t" style="left:1809.04px;top:681.20px;font-size:26.5px;line-height:32px;letter-spacing:0.002px;color:#9fa1a0;-webkit-text-stroke:0.7px #9fa1a0;">3 KB</span>
<span class="t" style="left:1894.89px;top:681.20px;font-size:26.5px;line-height:32px;letter-spacing:0.104px;color:#9fa1a0;-webkit-text-stroke:0.7px #9fa1a0;">JSON Document</span><div class="row alt" style="top:716px"></div>
<svg class="i" style="left:702.80px;top:721.90px" width="22.400" height="28.200" viewBox="0 0 22.400 28.200"><use href="#paper"/><rect x="4.300" y="7.400" width="13.700" height="13.700" rx="3.200" fill="#0b86f6"/><path d="M14.300 9.800L9.300 18.800" stroke="#fff" stroke-width="1.300" stroke-linecap="round"/><path d="M12 9.600L15.600 10.100" stroke="#fff" stroke-width="1.500" stroke-linecap="round"/></svg>
<span class="t" style="left:740.34px;top:721.20px;font-size:26.5px;line-height:32px;letter-spacing:0.339px;color:#dfe1e0;-webkit-text-stroke:0.7px #dfe1e0;">macrecovery.py</span>
<span class="t" style="left:1338.64px;top:721.20px;font-size:26.5px;line-height:32px;letter-spacing:0.035px;color:#9fa1a0;-webkit-text-stroke:0.7px #9fa1a0;">Jun 1, 2020 at 3:11 PM</span>
<span class="t" style="left:1793.83px;top:721.20px;font-size:26.5px;line-height:32px;letter-spacing:0.119px;color:#9fa1a0;-webkit-text-stroke:0.7px #9fa1a0;">14 KB</span>
<span class="t" style="left:1893.93px;top:721.20px;font-size:26.5px;line-height:32px;letter-spacing:0.389px;color:#9fa1a0;-webkit-text-stroke:0.7px #9fa1a0;">Python Source</span><div class="row" style="top:756px"></div>
<svg class="i" style="left:702.80px;top:761.90px" width="22.400" height="28.200" viewBox="0 0 22.400 28.200"><use href="#paper"/><rect x="3.2" y="7.3" width="1" height=".9" fill="#7a4fd8"/><rect x="4.6" y="7.3" width="9" height=".9" fill="#16a59a"/><rect x="11" y="8.6" width="5" height=".9" fill="#4aa3d8"/><rect x="3.2" y="10.8" width="5.5" height=".9" fill="#e83f8f"/><rect x="3.2" y="13" width="15" height=".9" fill="#b9c3cc"/><rect x="3.2" y="14.6" width="15" height=".9" fill="#a9b6c2"/><rect x="3.2" y="16" width="14" height=".9" fill="#b9c3cc"/><rect x="3.2" y="17.8" width="11" height=".9" fill="#c9a8e8"/><rect x="3.2" y="19.7" width="15.5" height=".9" fill="#9fb4c6"/><rect x="3.2" y="21.7" width="4.5" height=".9" fill="#35b8a8"/><rect x="9" y="21.7" width="6" height=".9" fill="#3a78e0"/></svg>
<span class="t" style="left:739.93px;top:761.20px;font-size:26.5px;line-height:32px;letter-spacing:-0.596px;color:#dfe1e0;-webkit-text-stroke:0.7px #dfe1e0;">README.md</span>
<span class="t" style="left:1338.64px;top:761.20px;font-size:26.5px;line-height:32px;letter-spacing:0.035px;color:#9fa1a0;-webkit-text-stroke:0.7px #9fa1a0;">Jun 1, 2020 at 3:11 PM</span>
<span class="t" style="left:1747.02px;top:761.20px;font-size:26.5px;line-height:32px;letter-spacing:0.816px;color:#9fa1a0;-webkit-text-stroke:0.7px #9fa1a0;">239 bytes</span>
<span class="t" style="left:1894.93px;top:761.20px;font-size:26.5px;line-height:32px;letter-spacing:-0.250px;color:#9fa1a0;-webkit-text-stroke:0.7px #9fa1a0;">Markdo…ument</span><div class="row alt" style="top:796px"></div>
<svg class="i" style="left:702.80px;top:801.90px" width="22.400" height="28.200" viewBox="0 0 22.400 28.200"><use href="#paper"/><rect x="3" y="2.80" width="7.7" height="1" fill="#b5b5b5"/><rect x="3" y="4.95" width="8.4" height="1" fill="#b5b5b5"/><rect x="3" y="7.10" width="8.0" height="1" fill="#b5b5b5"/><rect x="3" y="9.25" width="14.4" height="1" fill="#b5b5b5"/><rect x="3" y="11.40" width="14.5" height="1" fill="#b5b5b5"/><rect x="3" y="13.55" width="12.3" height="1" fill="#b5b5b5"/><rect x="3" y="15.70" width="12.1" height="1" fill="#b5b5b5"/><rect x="3" y="17.85" width="15.3" height="1" fill="#b5b5b5"/><rect x="3" y="20.00" width="13.0" height="1" fill="#b5b5b5"/><rect x="3" y="22.15" width="12.9" height="1" fill="#b5b5b5"/><rect x="3" y="24.30" width="16.0" height="1" fill="#b5b5b5"/></svg>
<span class="t" style="left:740.34px;top:801.20px;font-size:26.5px;line-height:32px;letter-spacing:0.326px;color:#dfe1e0;-webkit-text-stroke:0.7px #dfe1e0;">recovery_urls.txt</span>
<span class="t" style="left:1338.64px;top:801.20px;font-size:26.5px;line-height:32px;letter-spacing:0.035px;color:#9fa1a0;-webkit-text-stroke:0.7px #9fa1a0;">Jun 1, 2020 at 3:11 PM</span>
<span class="t" style="left:1810.08px;top:801.20px;font-size:26.5px;line-height:32px;letter-spacing:-0.345px;color:#9fa1a0;-webkit-text-stroke:0.7px #9fa1a0;">1 KB</span>
<span class="t" style="left:1893.93px;top:801.20px;font-size:26.5px;line-height:32px;letter-spacing:0.070px;color:#9fa1a0;-webkit-text-stroke:0.7px #9fa1a0;">Plain Text</span><div class="row" style="top:836px"></div>
<svg class="i" style="left:702.80px;top:841.90px" width="22.400" height="28.200" viewBox="0 0 22.400 28.200"><use href="#paper"/></svg>
<span class="t" style="left:739.93px;top:841.20px;font-size:26.5px;line-height:32px;letter-spacing:0.238px;color:#ffffff;-webkit-text-stroke:0.7px #ffffff;">RecoveryImage.chunklist</span>
<span class="t" style="left:1338.45px;top:841.20px;font-size:26.5px;line-height:32px;letter-spacing:0.399px;color:#bcd2f4;-webkit-text-stroke:0.7px #bcd2f4;">Today at 3:24 PM</span>
<span class="t" style="left:1809.87px;top:841.20px;font-size:26.5px;line-height:32px;letter-spacing:-0.274px;color:#bcd2f4;-webkit-text-stroke:0.7px #bcd2f4;">2 KB</span>
<span class="t" style="left:1893.93px;top:841.20px;font-size:26.5px;line-height:32px;letter-spacing:0.499px;color:#bcd2f4;-webkit-text-stroke:0.7px #bcd2f4;">Document</span><div class="row" style="top:876px"></div>
<svg class="i" style="left:702.80px;top:881.90px" width="22.400" height="28.200" viewBox="0 0 22.400 28.200"><use href="#paper"/><path d="M6.200 10.600H15.800L17.800 23.400H4.200Z" fill="url(#hd)"/><rect x="6.700" y="11" width="8.400" height="1.500" fill="#1b1b1b"/><path d="M4.400 22.200H17.600L17.800 24.100H4.200Z" fill="#161616"/><circle cx="11" cy="17" r="2.300" fill="none" stroke="#b8bdc1" stroke-width=".6"/></svg>
<span class="t" style="left:739.93px;top:881.20px;font-size:26.5px;line-height:32px;letter-spacing:0.187px;color:#ffffff;-webkit-text-stroke:0.7px #ffffff;">RecoveryImage.dmg</span>
<span class="t" style="left:1338.45px;top:881.20px;font-size:26.5px;line-height:32px;letter-spacing:0.399px;color:#bcd2f4;-webkit-text-stroke:0.7px #bcd2f4;">Today at 3:24 PM</span>
<span class="t" style="left:1746.89px;top:881.20px;font-size:26.5px;line-height:32px;letter-spacing:0.883px;color:#bcd2f4;-webkit-text-stroke:0.7px #bcd2f4;">462.7 MB</span>
<span class="t" style="left:1893.93px;top:881.20px;font-size:26.5px;line-height:32px;letter-spacing:0.101px;color:#bcd2f4;-webkit-text-stroke:0.7px #bcd2f4;">Disk Image</span><div class="row" style="top:916px"></div>
<svg class="i" style="left:648.00px;top:926.70px" width="12" height="18" viewBox="0 0 12 18" ><path d="M2 1.600L9.500 9L2 16.400" fill="none" stroke="#9b9d9c" stroke-width="2.500" stroke-linecap="round" stroke-linejoin="round"/></svg>
<svg class="i" style="left:670.00px;top:922.90px" width="28" height="26"><use href="#folder"/></svg>
<span class="t" style="left:710.34px;top:921.20px;font-size:26.5px;line-height:32px;letter-spacing:0.331px;color:#dfe1e0;-webkit-text-stroke:0.7px #dfe1e0;">macserial</span>
<span class="t" style="left:1338.64px;top:921.20px;font-size:26.5px;line-height:32px;letter-spacing:0.101px;color:#9fa1a0;-webkit-text-stroke:0.7px #9fa1a0;">Jun 1, 2020 at 3:12 PM</span>
<span class="t" style="left:1843.09px;top:921.20px;font-size:26.5px;line-height:32px;letter-spacing:0.000px;color:#9fa1a0;transform:scaleX(1.406);transform-origin:0 0;-webkit-text-stroke:0.7px #9fa1a0;">--</span>
<span class="t" style="left:1893.93px;top:921.20px;font-size:26.5px;line-height:32px;letter-spacing:0.230px;color:#9fa1a0;-webkit-text-stroke:0.7px #9fa1a0;">Folder</span><div class="row alt" style="top:956px"></div><div class="row alt" style="top:1036px"></div>
  <div class="pathbar"></div>
  <svg class="i" style="left:611.50px;top:1070.50px" width="26" height="26" viewBox="0 0 26 26" ><defs><linearGradient id="hdf" x1="0" y1="0" x2="1" y2="1"><stop offset="0" stop-color="#dbe6eb"/><stop offset=".5" stop-color="#c3d2d9"/><stop offset="1" stop-color="#b2c2ca"/></linearGradient></defs>
<path d="M3.400 .500H21.800Q22.800 .500 22.900 1.500L24.900 20.200Q25 21.200 24 21.200H1.400Q.400 21.200 .500 20.200L2.300 1.500Q2.400 .500 3.400 .500Z" fill="url(#hdf)"/>
<path d="M1 21.100H24.400L24.600 24.400H.800Z" fill="#8f999e"/><rect x="10.700" y="21.400" width="7.900" height="2.700" fill="#040404"/><rect x="4.500" y="21.500" width="5.200" height="1.600" fill="#3c3836"/><rect x="19.600" y="21.500" width="2.600" height="1.600" fill="#3c3836"/><path d="M1.600 24.300H23.800" stroke="#c9d3d8" stroke-width=".8"/>
<rect x="5.600" y="2" width="10.600" height="2.500" rx=".8" fill="#aebcc4" stroke="#93a3ac" stroke-width=".5"/><circle cx="15.100" cy="3.300" r=".9" fill="#f4f8fa"/>
<ellipse cx="12.100" cy="13.400" rx="8.700" ry="6.400" fill="none" stroke="#93a5af" stroke-width=".8"/><ellipse cx="12.100" cy="13.600" rx="4.200" ry="3" fill="#cfdce2" stroke="#9fb0ba" stroke-width=".6"/>
<path d="M16.400 4.800Q17.600 6.800 12.600 7.800Q5.200 9.200 3.800 14.600" fill="none" stroke="#8a8f95" stroke-width=".8"/></svg><svg class="i" style="left:793.90px;top:1072.90px" width="24.500" height="22.600" viewBox="0 0 28 26" preserveAspectRatio="none"><use href="#folder"/><circle cx="14" cy="15.500" r="5.200" fill="none" stroke="#1087cf" stroke-width="1.200"/><circle cx="14" cy="14" r="1.700" fill="#1087cf"/><path d="M10.700 19.200Q14 15 17.300 19.200" fill="#1087cf"/></svg><svg class="i" style="left:921.70px;top:1072.90px" width="24.500" height="22.600" viewBox="0 0 28 26" preserveAspectRatio="none"><use href="#folder"/><path d="M14 10.600L19 15.200H17.600V20H10.400V15.200H9Z" fill="#1087cf"/><rect x="12.900" y="16.600" width="2.200" height="3.400" fill="#39c2f6"/></svg><svg class="i" style="left:1169.70px;top:1072.90px" width="24.500" height="22.600" viewBox="0 0 28 26" preserveAspectRatio="none"><use href="#folder"/><circle cx="14" cy="15.500" r="5.300" fill="#1087cf"/><path d="M14 12.600V18M11.800 16L14 18.300L16.200 16" fill="none" stroke="#39c2f6" stroke-width="1.300" stroke-linecap="round" stroke-linejoin="round"/></svg><svg class="i" style="left:1351.60px;top:1072.90px" width="24.500" height="22.600" viewBox="0 0 28 26" preserveAspectRatio="none"><use href="#folder"/></svg><svg class="i" style="left:1584.00px;top:1072.90px" width="24.500" height="22.600" viewBox="0 0 28 26" preserveAspectRatio="none"><use href="#folder"/></svg><svg class="i" style="left:1729.80px;top:1072.90px" width="24.500" height="22.600" viewBox="0 0 28 26" preserveAspectRatio="none"><use href="#folder"/></svg><svg class="i" style="left:771.40px;top:1079.40px" width="8" height="12" viewBox="0 0 8 12" ><path d="M1.300 1.300L6.300 6L1.300 10.700" fill="none" stroke="#a3a5a4" stroke-width="2" stroke-linecap="round" stroke-linejoin="round"/></svg><svg class="i" style="left:899.50px;top:1079.40px" width="8" height="12" viewBox="0 0 8 12" ><path d="M1.300 1.300L6.300 6L1.300 10.700" fill="none" stroke="#a3a5a4" stroke-width="2" stroke-linecap="round" stroke-linejoin="round"/></svg><svg class="i" style="left:1148.00px;top:1079.40px" width="8" height="12" viewBox="0 0 8 12" ><path d="M1.300 1.300L6.300 6L1.300 10.700" fill="none" stroke="#a3a5a4" stroke-width="2" stroke-linecap="round" stroke-linejoin="round"/></svg><svg class="i" style="left:1329.60px;top:1079.40px" width="8" height="12" viewBox="0 0 8 12" ><path d="M1.300 1.300L6.300 6L1.300 10.700" fill="none" stroke="#a3a5a4" stroke-width="2" stroke-linecap="round" stroke-linejoin="round"/></svg><svg class="i" style="left:1562.00px;top:1079.40px" width="8" height="12" viewBox="0 0 8 12" ><path d="M1.300 1.300L6.300 6L1.300 10.700" fill="none" stroke="#a3a5a4" stroke-width="2" stroke-linecap="round" stroke-linejoin="round"/></svg><svg class="i" style="left:1707.60px;top:1079.40px" width="8" height="12" viewBox="0 0 8 12" ><path d="M1.300 1.300L6.300 6L1.300 10.700" fill="none" stroke="#a3a5a4" stroke-width="2" stroke-linecap="round" stroke-linejoin="round"/></svg>
  <span class="t" style="left:646.00px;top:1071.50px;font-size:22px;line-height:26px;letter-spacing:0.447px;color:#a3a5a4;-webkit-text-stroke:0.45px #a3a5a4;">Big Sur HD</span>
<span class="t" style="left:828.20px;top:1071.50px;font-size:22px;line-height:26px;letter-spacing:0.661px;color:#a3a5a4;-webkit-text-stroke:0.45px #a3a5a4;">Users</span>
<span class="t" style="left:956.64px;top:1071.50px;font-size:22px;line-height:26px;letter-spacing:0.693px;color:#a3a5a4;-webkit-text-stroke:0.45px #a3a5a4;">mykolagrymalyuk</span>
<span class="t" style="left:1204.30px;top:1071.50px;font-size:22px;line-height:26px;letter-spacing:0.695px;color:#a3a5a4;-webkit-text-stroke:0.45px #a3a5a4;">Downloads</span>
<span class="t" style="left:1385.86px;top:1071.50px;font-size:22px;line-height:26px;letter-spacing:1.028px;color:#a3a5a4;-webkit-text-stroke:0.45px #a3a5a4;">OpenCore-0-10</span>
<span class="t" style="left:1618.30px;top:1071.50px;font-size:22px;line-height:26px;letter-spacing:0.987px;color:#a3a5a4;-webkit-text-stroke:0.45px #a3a5a4;">Utilities</span>
<span class="t" style="left:1763.89px;top:1071.50px;font-size:22px;line-height:26px;letter-spacing:0.823px;color:#a3a5a4;-webkit-text-stroke:0.45px #a3a5a4;">macrecovery</span>
  <div class="redbox"></div>
 </div>
 <div class="rim"></div>
</div>
</body></html>
